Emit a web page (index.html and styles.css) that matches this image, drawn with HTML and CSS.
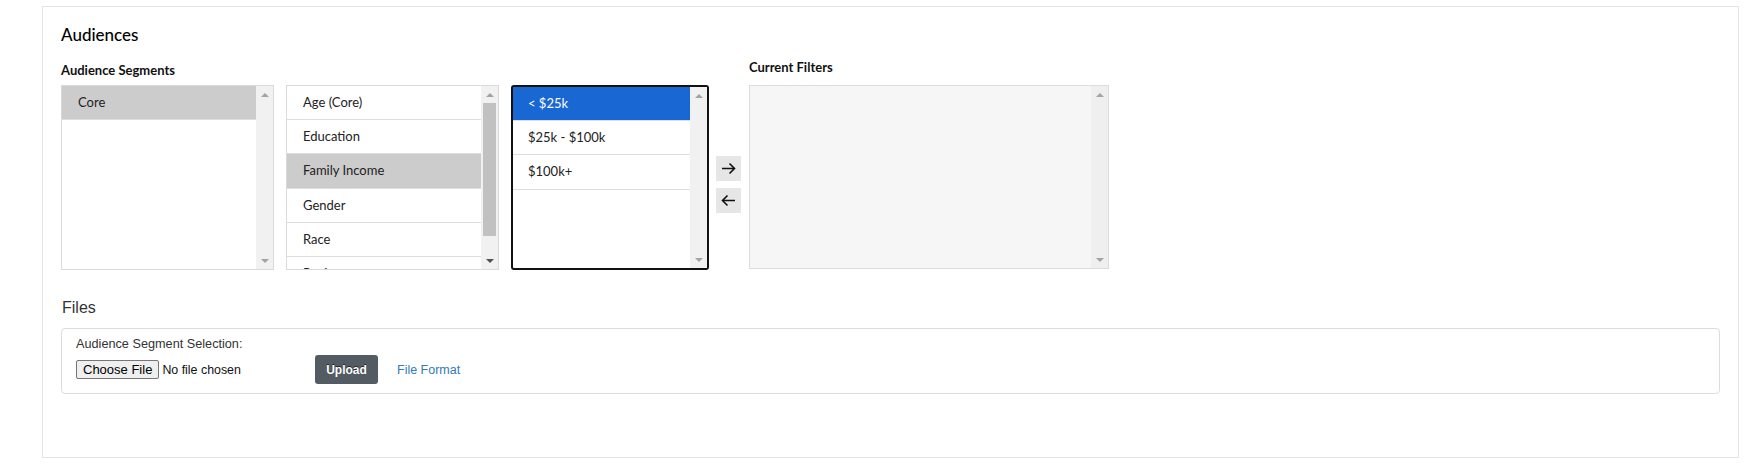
FILE: index.html
```html
<!DOCTYPE html>
<html>
<head>
<meta charset="utf-8">
<link rel="stylesheet" href="styles.css">
</head>
<body>
<div class="page">
  <div class="panel">
    <h2 class="title">Audiences</h2>
    <div class="selector">
      <div class="seg-group">
        <div class="label seg-label">Audience Segments</div>
        <div class="lists">
          <div class="list">
            <div class="items">
              <div class="item sel-grey">Core</div>
            </div>
            <div class="sb">
              <div class="sb-btn"><span class="tri up"></span></div>
              <div class="sb-track"></div>
              <div class="sb-btn"><span class="tri down"></span></div>
            </div>
          </div>
          <div class="list">
            <div class="items">
              <div class="item">Age (Core)</div>
              <div class="item">Education</div>
              <div class="item sel-grey">Family Income</div>
              <div class="item">Gender</div>
              <div class="item">Race</div>
              <div class="item">Region</div>
            </div>
            <div class="sb">
              <div class="sb-btn"><span class="tri up"></span></div>
              <div class="sb-track"><div class="thumb"></div></div>
              <div class="sb-btn"><span class="tri down dark"></span></div>
            </div>
          </div>
          <div class="list focused">
            <div class="items">
              <div class="item sel-blue">&lt; $25k</div>
              <div class="item">$25k - $100k</div>
              <div class="item">$100k+</div>
            </div>
            <div class="sb">
              <div class="sb-btn"><span class="tri up"></span></div>
              <div class="sb-track"></div>
              <div class="sb-btn"><span class="tri down"></span></div>
            </div>
          </div>
        </div>
      </div>
      <div class="arrows">
        <button class="arrow-btn" type="button" aria-label="Add">
          <svg width="15" height="15" viewBox="0 0 15 15"><path d="M1 7.5H13.5M8.5 2.5L13.5 7.5L8.5 12.5" fill="none" stroke="#111" stroke-width="1.6"/></svg>
        </button>
        <button class="arrow-btn" type="button" aria-label="Remove">
          <svg width="15" height="15" viewBox="0 0 15 15"><path d="M14 7.5H1.5M6.5 2.5L1.5 7.5L6.5 12.5" fill="none" stroke="#111" stroke-width="1.6"/></svg>
        </button>
      </div>
      <div class="filter-group">
        <div class="label filter-label">Current Filters</div>
        <div class="filters">
          <div class="items"></div>
          <div class="sb sb-light">
            <div class="sb-btn"><span class="tri up"></span></div>
            <div class="sb-track"></div>
            <div class="sb-btn"><span class="tri down"></span></div>
          </div>
        </div>
      </div>
    </div>

    <h3 class="files-title">Files</h3>
    <div class="files-card">
      <div class="files-label">Audience Segment Selection:</div>
      <div class="files-row">
        <input class="file-input" type="file">
        <button class="upload" type="button">Upload</button>
        <a class="format-link" href="#">File Format</a>
      </div>
    </div>
  </div>
</div>
</body>
</html>
```

FILE: styles.css
```css
html, body {
  margin: 0;
  padding: 0;
  background: #ffffff;
}

.page {
  padding: 6px 18px 0 42px;
}

.panel {
  border: 1px solid #e4e4e4;
  padding: 18px 18px 63px 18px;
  background: #fff;
  font-family: Lato, "Noto Sans", sans-serif;
  color: #222;
}

.title {
  margin: 0 0 17px 0;
  font-size: 17px;
  font-weight: 500;
  line-height: 20px;
  color: #000;
}

.selector {
  display: flex;
  align-items: flex-start;
}

.label {
  font-size: 13px;
  font-weight: 700;
  color: #111;
}

.seg-label {
  line-height: 16px;
  margin-bottom: 7px;
}

.filter-label {
  line-height: 16px;
  margin-top: -3px;
  margin-bottom: 10px;
}

.lists {
  display: flex;
  gap: 12px;
}

.list {
  display: flex;
  width: 213px;
  height: 185px;
  box-sizing: border-box;
  border: 1px solid #dadada;
  background: #fff;
}

.list.focused {
  width: 198px;
  border: 2px solid #111;
  border-radius: 3px;
}

.items {
  flex: 1;
  overflow: hidden;
}

.item {
  padding: 7px 16px;
  font-size: 13px;
  line-height: 19.2px;
  border-bottom: 1px solid #dedede;
  color: #222;
  white-space: nowrap;
}

.focused .item {
  padding-left: 15px;
}

.item.sel-grey {
  background: #cccccc;
}

.item.sel-blue {
  background: #1967d2;
  color: #fff;
}

.sb {
  width: 17px;
  background: #f1f1f1;
  display: flex;
  flex-direction: column;
}

.sb-btn {
  height: 17px;
  display: flex;
  align-items: center;
  justify-content: center;
}

.sb-track {
  flex: 1;
  display: flex;
  flex-direction: column;
  align-items: center;
}

.thumb {
  width: 13px;
  height: 133px;
  background: #c1c1c1;
}

.tri {
  width: 0;
  height: 0;
  border-left: 4px solid transparent;
  border-right: 4px solid transparent;
}

.tri.up {
  border-bottom: 4px solid #a3a3a3;
}

.tri.down {
  border-top: 4px solid #a3a3a3;
}

.tri.down.dark {
  border-top-color: #505050;
}

.arrows {
  display: flex;
  flex-direction: column;
  gap: 7px;
  margin: 94px 8px 0 7px;
}

.arrow-btn {
  width: 25px;
  height: 25px;
  padding: 0;
  border: none;
  background: #e6e6e6;
  display: flex;
  align-items: center;
  justify-content: center;
}

.filters {
  display: flex;
  width: 360px;
  height: 184px;
  box-sizing: border-box;
  border: 1px solid #dcdcdc;
  background: #f6f6f6;
}

.sb-light {
  background: #efefef;
}

.files-title {
  margin: 29px 0 11px 1px;
  font-family: "Liberation Sans", Arial, sans-serif;
  font-size: 16px;
  font-weight: 400;
  line-height: 18px;
  color: #333;
}

.files-card {
  border: 1px solid #dcdcdc;
  border-radius: 4px;
  padding: 7px 14px 9px 14px;
  font-family: "Liberation Sans", Arial, sans-serif;
  font-size: 12.7px;
  color: #333;
}

.files-label {
  line-height: 16px;
  margin-bottom: 3px;
}

.files-row {
  display: flex;
  align-items: center;
}

.file-input {
  width: 225px;
  margin: 0;
  font-family: "Liberation Sans", Arial, sans-serif;
  font-size: 12.4px;
  color: #111;
}

.file-input::file-selector-button {
  font-family: "Liberation Sans", Arial, sans-serif;
  font-size: 13px;
  padding: 1px 6px;
  margin-right: 3px;
  background: #efefef;
  border: 1px solid #767676;
  border-radius: 2px;
  color: #000;
}

.upload {
  margin-left: 14px;
  width: 63px;
  height: 29px;
  border: none;
  border-radius: 3px;
  background: #535b63;
  color: #fff;
  font-family: "Liberation Sans", Arial, sans-serif;
  font-size: 12px;
  font-weight: 700;
  text-shadow: 0 -1px 0 rgba(0,0,0,0.6);
  padding: 0;
}

.format-link {
  margin-left: 19px;
  color: #337ab7;
  text-decoration: none;
  font-size: 12.5px;
}
```
